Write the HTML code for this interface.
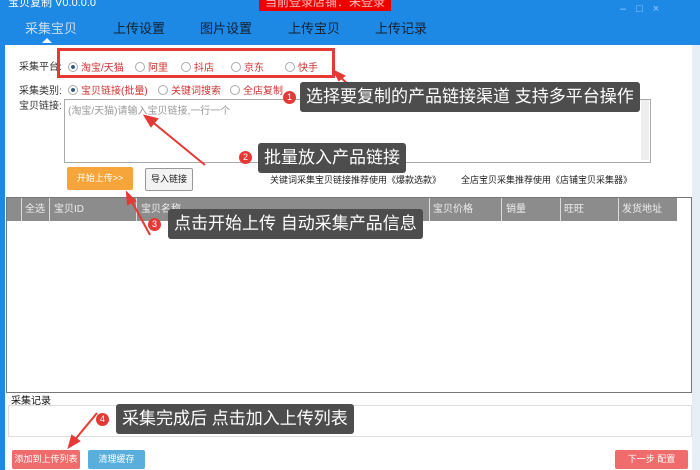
<!DOCTYPE html>
<html><head><meta charset="utf-8"><style>
body{margin:0;width:700px;height:470px;overflow:hidden;background:#fff;font-family:"Liberation Sans","Noto Sans CJK SC",sans-serif;position:relative}
.a{position:absolute}
.top{left:0;top:0;width:700px;height:45px;background:#1e88e5}
.tab{top:18px;color:#123;font-size:13px}
.s{font-size:10px;color:#333;white-space:nowrap}
.r{color:#c33}
.rad{display:inline-block;width:8px;height:8px;border:1px solid #aaa;border-radius:50%;vertical-align:-1px;margin-right:3px;background:#fff}
.rad.on{background:radial-gradient(#357 30%,#fff 40%)}
.tip{background:#4d4d4d;color:#fff;border-radius:3px;font-size:17px;line-height:30px;padding:0 6px;white-space:nowrap}
.bd{width:13px;height:13px;border-radius:50%;background:#e53935;color:#fff;font-size:9px;text-align:center;line-height:13px}
.th{top:198px;height:23px;background:#8c8c8c;color:#eee;font-size:10px;line-height:23px}
.btn{font-size:9px;color:#fff;text-align:center;border-radius:2px;white-space:nowrap}
</style></head><body>
<div class="a top"></div>
<div class="a" style="left:8px;top:-6px;color:#fff;font-size:11px">宝贝复制 V0.0.0.0</div>
<div class="a" style="left:259px;top:-4px;background:#e00;color:#fbb;font-size:12px;padding:0 6px;height:15px;line-height:12px">当前登录店铺：未登录</div>
<div class="a" style="left:620px;top:3px;color:#9cf;font-size:11px;letter-spacing:10px">–□×</div>
<div class="a tab" style="left:25px;color:#cde">采集宝贝</div>
<div class="a" style="left:42px;top:38px;border:5px solid transparent;border-bottom-color:#fff;border-top:0"></div>
<div class="a tab" style="left:113px">上传设置</div>
<div class="a tab" style="left:200px">图片设置</div>
<div class="a tab" style="left:288px">上传宝贝</div>
<div class="a tab" style="left:375px">上传记录</div>
<div class="a" style="left:0;top:45px;width:5px;height:425px;background:#1e88e5"></div>
<div class="a" style="left:692px;top:45px;width:8px;height:425px;background:#e8eef5"></div>

<div class="a s" style="left:19px;top:58px">采集平台:</div>
<div class="a" style="left:57px;top:48px;width:272px;height:24px;border:3px solid #e53935"></div>
<div class="a s r" style="left:68px;top:59px"><span class="rad on"></span>淘宝/天猫</div>
<div class="a s r" style="left:135px;top:59px"><span class="rad"></span>阿里</div>
<div class="a s r" style="left:181px;top:59px"><span class="rad"></span>抖店</div>
<div class="a s r" style="left:231px;top:59px"><span class="rad"></span>京东</div>
<div class="a s r" style="left:285px;top:59px"><span class="rad"></span>快手</div>
<div class="a s" style="left:19px;top:82px">采集类别:</div>
<div class="a s r" style="left:68px;top:82px"><span class="rad on"></span>宝贝链接(批量)</div>
<div class="a s r" style="left:158px;top:82px"><span class="rad"></span>关键词搜索</div>
<div class="a s r" style="left:230px;top:82px"><span class="rad"></span>全店复制</div>
<div class="a s" style="left:19px;top:97px">宝贝链接:</div>
<div class="a" style="left:64px;top:99px;width:585px;height:62px;border:1px solid #aaa"></div>
<div class="a" style="left:68px;top:102px;font-size:10px;color:#999">(淘宝/天猫)请输入宝贝链接,一行一个</div>
<div class="a" style="left:641px;top:100px;width:8px;height:60px;background:#eee"></div>
<div class="a btn" style="left:67px;top:167px;width:66px;height:23px;line-height:23px;background:#f5a53a">开始上传&gt;&gt;</div>
<div class="a btn" style="left:145px;top:168px;width:46px;height:21px;line-height:21px;background:#f3f3f3;border:1px solid #999;color:#222">导入链接</div>
<div class="a" style="left:270px;top:173px;font-size:9px;color:#222;white-space:nowrap">关键词采集宝贝链接推荐使用《爆款选款》 &nbsp;&nbsp;&nbsp;&nbsp;&nbsp;&nbsp;&nbsp;全店宝贝采集推荐使用《店铺宝贝采集器》</div>

<div class="a" style="left:6px;top:197px;width:684px;height:194px;border:1px solid #777"></div>
<div class="a th" style="left:7px;width:670px"></div>
<div class="a th" style="left:21px;width:1px;background:#ddd"></div>
<div class="a th" style="left:49px;width:1px;background:#ddd"></div>
<div class="a th" style="left:136px;width:1px;background:#ddd"></div>
<div class="a th" style="left:429px;width:1px;background:#ddd"></div>
<div class="a th" style="left:501px;width:1px;background:#ddd"></div>
<div class="a th" style="left:560px;width:1px;background:#ddd"></div>
<div class="a th" style="left:618px;width:1px;background:#ddd"></div>
<div class="a th" style="left:25px;background:none">全选</div>
<div class="a th" style="left:54px;background:none">宝贝ID</div>
<div class="a th" style="left:141px;background:none">宝贝名称</div>
<div class="a th" style="left:433px;background:none">宝贝价格</div>
<div class="a th" style="left:506px;background:none">销量</div>
<div class="a th" style="left:564px;background:none">旺旺</div>
<div class="a th" style="left:622px;background:none">发货地址</div>

<div class="a" style="left:11px;top:392px;font-size:10px;color:#111">采集记录</div>
<div class="a" style="left:8px;top:405px;width:682px;height:30px;border:1px solid #ddd"></div>
<div class="a btn" style="left:12px;top:450px;width:68px;height:19px;line-height:19px;background:#f06b6b">添加到上传列表</div>
<div class="a btn" style="left:88px;top:450px;width:57px;height:19px;line-height:19px;background:#5aaedc">清理缓存</div>
<div class="a btn" style="left:615px;top:450px;width:73px;height:19px;line-height:19px;background:#f06b6b">下一步 配置</div>

<svg class="a" style="left:0;top:0" width="700" height="470"><g stroke="#e53935" stroke-width="2" fill="#e53935">
<line x1="350" y1="86" x2="338" y2="75"/><polygon points="334,71 344,76 339,80"/>
<line x1="205" y1="165" x2="150" y2="120"/><polygon points="145,116 157,119 151,126"/>
<line x1="150" y1="235" x2="130" y2="198"/><polygon points="127,193 135,201 128,204"/>
<line x1="97" y1="413" x2="73" y2="442"/><polygon points="69,447 72,436 79,441"/>
</g></svg>
<div class="a bd" style="left:283px;top:91px">1</div>
<div class="a tip" style="left:300px;top:82px">选择要复制的产品链接渠道 支持多平台操作</div>
<div class="a bd" style="left:239px;top:151px">2</div>
<div class="a tip" style="left:258px;top:143px">批量放入产品链接</div>
<div class="a bd" style="left:148px;top:218px">3</div>
<div class="a tip" style="left:168px;top:209px">点击开始上传 自动采集产品信息</div>
<div class="a bd" style="left:96px;top:413px">4</div>
<div class="a tip" style="left:116px;top:404px">采集完成后 点击加入上传列表</div>
</body></html>
